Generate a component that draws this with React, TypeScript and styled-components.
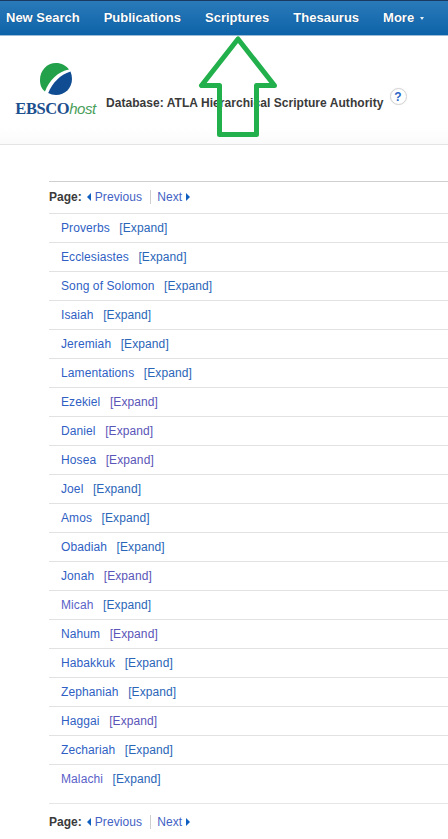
import React from "react";
import styled, { createGlobalStyle } from "styled-components";

const Global = createGlobalStyle`
  html, body { margin: 0; padding: 0; background: #fff; }
  body { font-family: "Liberation Sans", Arial, sans-serif; font-size: 12px; color: #333; }
  #root { width: 448px; height: 839px; overflow: hidden; }
`;

const Page = styled.div`
  position: relative;
  width: 448px;
  height: 839px;
  overflow: hidden;
  background: #fff;
`;

const TopBar = styled.nav`
  display: flex;
  align-items: center;
  height: 36px;
  box-sizing: border-box;
  padding: 0 0 1px 6px;
  border-top: 1px solid #1b3a63;
  border-bottom: 1px solid #9dbbd6;
  background: linear-gradient(#2a7ab9, #0d63a8);
`;

const NavItem = styled.a`
  margin-right: 24px;
  color: #fff;
  font-size: 13px;
  font-weight: 700;
  white-space: nowrap;
  text-shadow: 0 0 1px rgba(0, 30, 70, 0.5);
`;

const Caret = styled.span`
  display: inline-block;
  width: 0;
  height: 0;
  margin-left: 6px;
  vertical-align: 2px;
  border-left: 2.5px solid transparent;
  border-right: 2.5px solid transparent;
  border-top: 3px solid #e6eef6;
`;

const Header = styled.header`
  display: flex;
  align-items: flex-start;
  height: 109px;
  box-sizing: border-box;
  border-bottom: 1px solid #e4e4e4;
  background: linear-gradient(#fff 85%, #fafafa);
  padding: 27px 0 0 14px;
`;

const Logo = styled.div`
  display: flex;
  flex-direction: column;
  align-items: center;
  width: 83px;
`;

const LogoWord = styled.div`
  margin-top: 5px;
  font-family: "Liberation Serif", serif;
  font-size: 16.5px;
  font-weight: 700;
  line-height: 17px;
  letter-spacing: -0.4px;
  color: #1c4f8e;
  white-space: nowrap;
`;

const LogoHost = styled.span`
  font-family: "Liberation Sans", sans-serif;
  font-size: 15px;
  font-style: italic;
  font-weight: 400;
  letter-spacing: -0.5px;
  color: #4aa05a;
`;

const DbLabel = styled.div`
  margin: 32px 0 0 9px;
  font-size: 12px;
  font-weight: 700;
  line-height: 16px;
  letter-spacing: 0.05px;
  color: #3a3a3a;
  white-space: nowrap;
`;

const Help = styled.span`
  display: flex;
  align-items: center;
  justify-content: center;
  width: 15px;
  height: 15px;
  margin: 25px 0 0 6px;
  border: 1px solid #d2d2d2;
  border-radius: 50%;
  color: #2a66c8;
  font-size: 12px;
  font-weight: 700;
  box-shadow: 0 0 1px #ddd;
`;

const Content = styled.main`
  margin: 36px 0 0 49px;
  border-top: 1px solid #cfcfcf;
`;

const Pager = styled.div`
  display: flex;
  align-items: center;
  height: 31px;
  box-sizing: border-box;
  padding-bottom: 2px;
`;

const PageLabel = styled.span`
  margin-right: 5px;
  font-weight: 700;
  color: #3a3a3a;
`;

const PagerLink = styled.a`
  letter-spacing: 0.1px;
  color: #3f62c4;
`;

const Arrow = styled.span<{ $dir: "left" | "right" }>`
  display: inline-block;
  width: 0;
  height: 0;
  border-top: 4px solid transparent;
  border-bottom: 4px solid transparent;
  ${(p) =>
    p.$dir === "left"
      ? "border-right: 4px solid #0f5fc0; margin-right: 4px;"
      : "border-left: 4px solid #0f5fc0; margin-left: 4px;"}
`;

const PagerSep = styled.span`
  width: 1px;
  height: 14px;
  margin: 0 6px 0 8px;
  background: #cfcfcf;
`;

const List = styled.ul`
  list-style: none;
  margin: 0;
  padding: 0;
`;

const Row = styled.li`
  display: flex;
  align-items: center;
  height: 29px;
  box-sizing: border-box;
  padding-left: 12px;
  border-top: 1px solid #e2e2e2;
  white-space: nowrap;
  letter-spacing: 0.1px;
`;

const BookLink = styled.a<{ $seen?: boolean }>`
  color: ${(p) => (p.$seen ? "#5a62c8" : "#2f5fc4")};
`;

const ExpandLink = styled.a<{ $seen?: boolean }>`
  margin-left: 9.5px;
  color: ${(p) => (p.$seen ? "#5a55b8" : "#2a66b8")};
`;

const BottomPager = styled.div`
  margin-top: 10px;
  padding-top: 3px;
  border-top: 1px solid #e6e6e6;
`;

const Callout = styled.svg`
  position: absolute;
  left: 195px;
  top: 32px;
  pointer-events: none;
`;

const books: [string, boolean?, boolean?][] = [
  ["Proverbs"],
  ["Ecclesiastes"],
  ["Song of Solomon"],
  ["Isaiah"],
  ["Jeremiah"],
  ["Lamentations"],
  ["Ezekiel", false, true],
  ["Daniel", false, true],
  ["Hosea", false, true],
  ["Joel"],
  ["Amos"],
  ["Obadiah"],
  ["Jonah", false, true],
  ["Micah", true],
  ["Nahum", false, true],
  ["Habakkuk"],
  ["Zephaniah"],
  ["Haggai", false, true],
  ["Zechariah"],
  ["Malachi", true],
];

function PagerBar() {
  return (
    <Pager>
      <PageLabel>Page:</PageLabel>
      <Arrow $dir="left" />
      <PagerLink>Previous</PagerLink>
      <PagerSep />
      <PagerLink>Next</PagerLink>
      <Arrow $dir="right" />
    </Pager>
  );
}

export default function App() {
  return (
    <Page>
      <Global />
      <TopBar>
        <NavItem>New Search</NavItem>
        <NavItem>Publications</NavItem>
        <NavItem>Scriptures</NavItem>
        <NavItem>Thesaurus</NavItem>
        <NavItem>
          More<Caret />
        </NavItem>
      </TopBar>
      <Header>
        <Logo>
          <svg width="32" height="32" viewBox="0 0 32 32">
            <path d="M5 28.5C1 25.5 0 21 0 17 0 7.5 7 0 16 0c5.500 0 10 2.500 13 6.500C18 8.500 9.500 17 5 28.500z" fill="#22a04a" />
            <path d="M30.500 8.500C31.500 11 32 13.500 32 16c0 9-7 16-16 16-3 0-5.500-.8-7.800-2C12.500 20 20 11.500 30.500 8.500z" fill="#0f4c92" />
          </svg>
          <LogoWord>
            EBSCO<LogoHost>host</LogoHost>
          </LogoWord>
        </Logo>
        <DbLabel>Database: ATLA Hierarchical Scripture Authority</DbLabel>
        <Help>?</Help>
      </Header>
      <Content>
        <PagerBar />
        <List>
          {books.map(([name, seen, seenExpand]) => (
            <Row key={name}>
              <BookLink $seen={seen}>{name}</BookLink>
              <ExpandLink $seen={seenExpand}>[Expand]</ExpandLink>
            </Row>
          ))}
        </List>
        <BottomPager>
          <PagerBar />
        </BottomPager>
      </Content>
      <Callout width="90" height="110" viewBox="195 32 90 110">
        <path d="M238 39 L201.500 85.500 L219.500 85.500 L219.500 134.500 L256.500 134.500 L256.500 85.500 L274.500 85.500 Z" fill="none" stroke="#22b04c" strokeWidth="5" strokeLinejoin="round" />
      </Callout>
    </Page>
  );
}
